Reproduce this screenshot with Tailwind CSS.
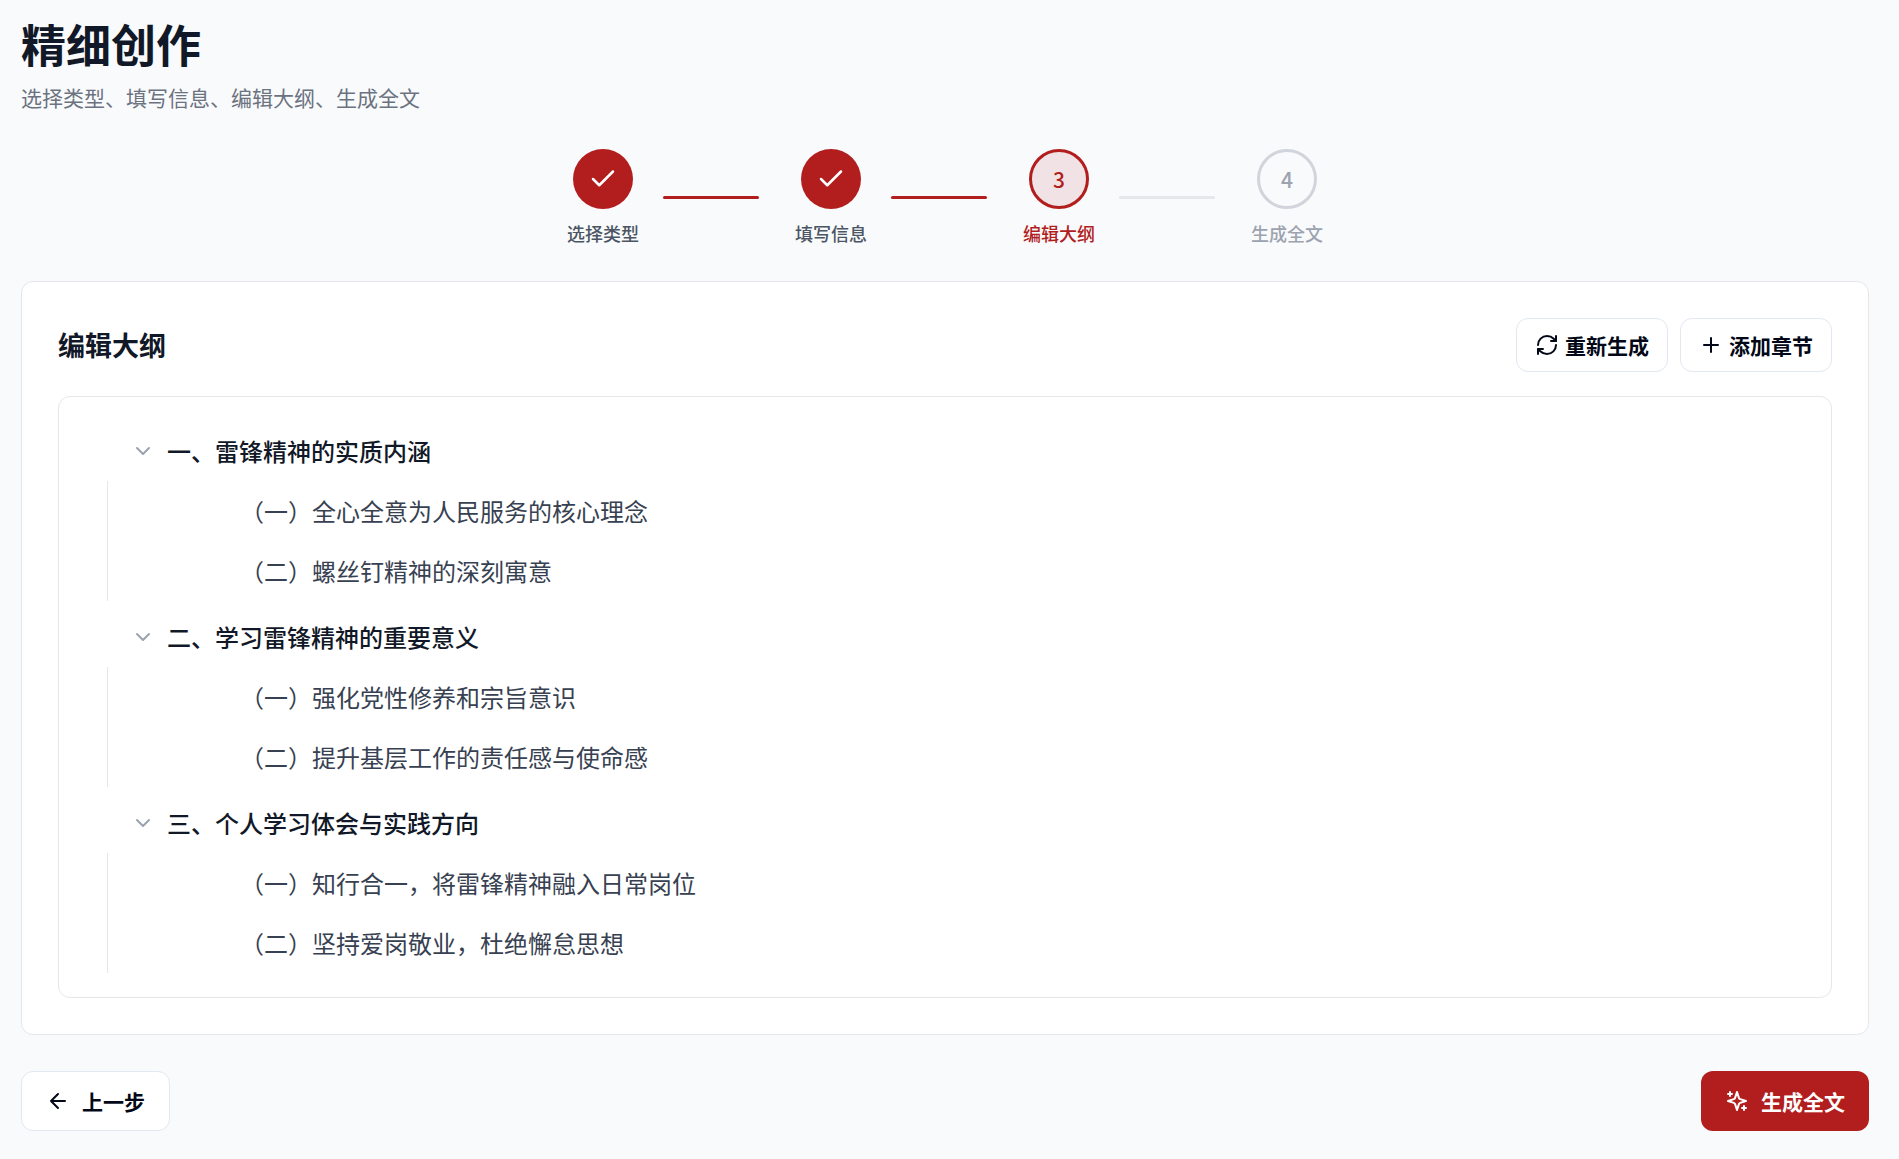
<!DOCTYPE html>
<html lang="zh-CN">
  <head>
    <meta charset="UTF-8" />
    <meta name="viewport" content="width=device-width, initial-scale=1.0" />
    <title>精细创作</title>
    <script src="https://cdn.jsdelivr.net/npm/@tailwindcss/browser@4"></script>
    <style>
      body {
        font-family: "Noto Sans CJK SC", sans-serif;
      }
    </style>
  </head>
  <body class="bg-[#f9fafc] min-h-screen pt-[17px] pb-7 pl-[21px] pr-[30px]">
    <!-- Icons -->
    <svg class="hidden" fill="none" stroke="currentColor">
      <symbol id="icon-check" viewBox="0 0 24 24">
        <path d="M20 6 9 17l-5-5" />
      </symbol>
      <symbol id="icon-chevron" viewBox="0 0 24 24">
        <path d="m6 9 6 6 6-6" />
      </symbol>
      <symbol id="icon-refresh" viewBox="0 0 24 24">
        <path d="M3 12a9 9 0 0 1 9-9 9.75 9.75 0 0 1 6.74 2.74L21 8" />
        <path d="M21 3v5h-5" />
        <path d="M21 12a9 9 0 0 1-9 9 9.75 9.75 0 0 1-6.74-2.74L3 16" />
        <path d="M8 16H3v5" />
      </symbol>
      <symbol id="icon-plus" viewBox="0 0 24 24">
        <path d="M5 12h14M12 5v14" />
      </symbol>
      <symbol id="icon-arrow-left" viewBox="0 0 24 24">
        <path d="m12 19-7-7 7-7M19 12H5" />
      </symbol>
      <symbol id="icon-sparkles" viewBox="0 0 24 24">
        <path
          d="m12 3-1.912 5.813a2 2 0 0 1-1.275 1.275L3 12l5.813 1.912a2 2 0 0 1 1.275 1.275L12 21l1.912-5.813a2 2 0 0 1 1.275-1.275L21 12l-5.813-1.912a2 2 0 0 1-1.275-1.275L12 3Z"
        />
        <path d="M5 3v4M19 17v4M3 5h4M17 19h4" />
      </symbol>
    </svg>

    <header>
      <h1 class="text-[45px] leading-[54px] font-bold text-[#111827]">精细创作</h1>
      <p class="mt-3 text-[21px] leading-7 text-[#6b7280]">
        选择类型、填写信息、编辑大纲、生成全文
      </p>
    </header>

    <!-- Steps -->
    <ol class="mt-[38px] flex justify-center gap-9 text-[18px] leading-6 font-medium">
      <li class="flex items-center gap-6">
        <div class="flex flex-col items-center gap-3 text-[#4b5563]">
          <span class="flex size-[60px] items-center justify-center rounded-full bg-[#b21e1e] text-white">
            <svg class="size-[30px] fill-none stroke-current stroke-2" stroke-linecap="round" stroke-linejoin="round"><use href="#icon-check" /></svg>
          </span>
          <span>选择类型</span>
        </div>
        <div class="h-[3px] w-24 rounded-full bg-[#b21e1e]"></div>
      </li>
      <li class="flex items-center gap-6">
        <div class="flex flex-col items-center gap-3 text-[#4b5563]">
          <span class="flex size-[60px] items-center justify-center rounded-full bg-[#b21e1e] text-white">
            <svg class="size-[30px] fill-none stroke-current stroke-2" stroke-linecap="round" stroke-linejoin="round"><use href="#icon-check" /></svg>
          </span>
          <span>填写信息</span>
        </div>
        <div class="h-[3px] w-24 rounded-full bg-[#b21e1e]"></div>
      </li>
      <li class="flex items-center gap-6" aria-current="step">
        <div class="flex flex-col items-center gap-3 text-[#b21e1e]">
          <span class="flex size-[60px] items-center justify-center rounded-full border-3 border-[#b21e1e] bg-[#b21e1e]/10 text-[21px]">3</span>
          <span>编辑大纲</span>
        </div>
        <div class="h-[3px] w-24 rounded-full bg-[#e5e7eb]"></div>
      </li>
      <li class="flex items-center">
        <div class="flex flex-col items-center gap-3 text-[#9ca3af]">
          <span class="flex size-[60px] items-center justify-center rounded-full border-3 border-[#d1d5db] text-[21px]">4</span>
          <span>生成全文</span>
        </div>
      </li>
    </ol>

    <main class="mt-9 rounded-xl border border-[#e5e7eb] bg-white p-9">
      <div class="flex items-center justify-between">
        <h2 class="text-[27px] leading-9 font-bold text-[#111827]">编辑大纲</h2>
        <div class="flex gap-3 text-[21px] leading-7 font-bold text-[#020817]">
          <button type="button" class="flex h-[54px] items-center gap-[6px] rounded-xl border border-[#e2e8f0] bg-white px-[18px] hover:bg-slate-50">
            <svg class="size-6 fill-none stroke-current stroke-2" stroke-linecap="round" stroke-linejoin="round"><use href="#icon-refresh" /></svg>
            重新生成
          </button>
          <button type="button" class="flex h-[54px] items-center gap-[6px] rounded-xl border border-[#e2e8f0] bg-white px-[18px] hover:bg-slate-50">
            <svg class="size-6 fill-none stroke-current stroke-2" stroke-linecap="round" stroke-linejoin="round"><use href="#icon-plus" /></svg>
            添加章节
          </button>
        </div>
      </div>

      <!-- Outline -->
      <ul class="mt-6 flex flex-col gap-[6px] rounded-xl border border-[#e5e7eb] p-6 text-[24px] leading-9 text-[#374151]">
        <li>
          <div class="flex h-[60px] items-center gap-[6px] pl-[42px] font-medium text-[#111827]">
            <button type="button" class="p-[6px] text-[#9ca3af]" aria-label="收起章节">
              <svg class="size-6 fill-none stroke-current stroke-2" stroke-linecap="round" stroke-linejoin="round"><use href="#icon-chevron" /></svg>
            </button>
            <span>一、雷锋精神的实质内涵</span>
          </div>
          <ul class="ml-6 border-l border-[#e5e7eb] pl-[132px]">
            <li class="flex h-[60px] items-center">（一）全心全意为人民服务的核心理念</li>
            <li class="flex h-[60px] items-center">（二）螺丝钉精神的深刻寓意</li>
          </ul>
        </li>
        <li>
          <div class="flex h-[60px] items-center gap-[6px] pl-[42px] font-medium text-[#111827]">
            <button type="button" class="p-[6px] text-[#9ca3af]" aria-label="收起章节">
              <svg class="size-6 fill-none stroke-current stroke-2" stroke-linecap="round" stroke-linejoin="round"><use href="#icon-chevron" /></svg>
            </button>
            <span>二、学习雷锋精神的重要意义</span>
          </div>
          <ul class="ml-6 border-l border-[#e5e7eb] pl-[132px]">
            <li class="flex h-[60px] items-center">（一）强化党性修养和宗旨意识</li>
            <li class="flex h-[60px] items-center">（二）提升基层工作的责任感与使命感</li>
          </ul>
        </li>
        <li>
          <div class="flex h-[60px] items-center gap-[6px] pl-[42px] font-medium text-[#111827]">
            <button type="button" class="p-[6px] text-[#9ca3af]" aria-label="收起章节">
              <svg class="size-6 fill-none stroke-current stroke-2" stroke-linecap="round" stroke-linejoin="round"><use href="#icon-chevron" /></svg>
            </button>
            <span>三、个人学习体会与实践方向</span>
          </div>
          <ul class="ml-6 border-l border-[#e5e7eb] pl-[132px]">
            <li class="flex h-[60px] items-center">（一）知行合一，将雷锋精神融入日常岗位</li>
            <li class="flex h-[60px] items-center">（二）坚持爱岗敬业，杜绝懈怠思想</li>
          </ul>
        </li>
      </ul>
    </main>

    <footer class="mt-9 flex justify-between text-[21px] leading-7 font-bold">
      <button type="button" class="flex h-[60px] items-center gap-3 rounded-xl border border-[#e2e8f0] bg-white px-6 text-[#020817] hover:bg-slate-50">
        <svg class="size-6 fill-none stroke-current stroke-2" stroke-linecap="round" stroke-linejoin="round"><use href="#icon-arrow-left" /></svg>
        上一步
      </button>
      <button type="button" class="flex h-[60px] items-center gap-3 rounded-xl bg-[#b21e1e] px-6 text-white hover:bg-[#b21e1e]/90">
        <svg class="size-6 fill-none stroke-current stroke-2" stroke-linecap="round" stroke-linejoin="round"><use href="#icon-sparkles" /></svg>
        生成全文
      </button>
    </footer>
  </body>
</html>
